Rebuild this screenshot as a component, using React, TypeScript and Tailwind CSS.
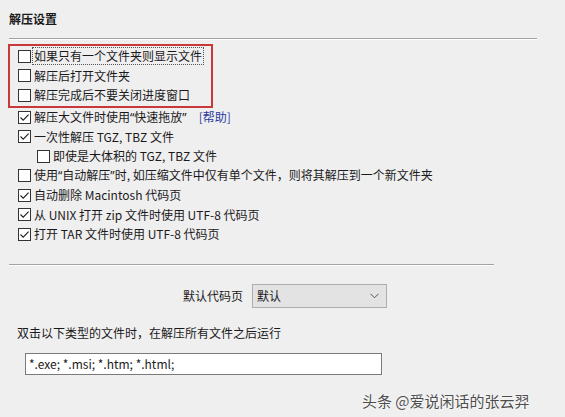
import React from "react";

const font = { fontFamily: '"Noto Sans CJK SC", "Noto Sans", sans-serif' };

// 引号用窄的西文字体
function Q({ children }: { children: React.ReactNode }) {
  return <span style={{ fontFamily: '"Noto Sans", sans-serif' }}>{children}</span>;
}

function Box({ checked }: { checked?: boolean }) {
  return (
    <span className="flex h-[13px] w-[13px] shrink-0 items-center justify-center border border-[#333] bg-white">
      {checked && (
        <svg width="11" height="11" viewBox="0 0 11 11">
          <path d="M1.5 5.5 L4.2 8.2 L9.6 2.6" fill="none" stroke="#1f1f1f" strokeWidth="1.1" />
        </svg>
      )}
    </span>
  );
}

function Row({
  checked,
  indent,
  focus,
  children,
}: {
  checked?: boolean;
  indent?: boolean;
  focus?: boolean;
  children: React.ReactNode;
}) {
  return (
    <div className={`flex h-[19.5px] items-center gap-[2px] ${indent ? "pl-[37px]" : "pl-[18px]"}`}>
      <Box checked={checked} />
      <span
        className={`whitespace-nowrap px-[1px] leading-[16px] ${
          focus ? "outline-1 outline-dotted outline-[#555]" : ""
        }`}
      >
        {children}
      </span>
    </div>
  );
}

export default function App() {
  return (
    <div className="relative h-[417px] w-[565px] overflow-hidden bg-[#f0eff0] text-[12px] text-[#1a1a1a]" style={font}>
      <div className="pl-[9px] pt-[11px] text-[12px] font-bold leading-[16px]">解压设置</div>

      <div className="ml-[9px] mt-[11px] w-[528px] border-b border-[#a3a3a3] shadow-[0_1px_0_#ffffff]" />

      {/* 框起来的三项 */}
      <div className="ml-[8px] mt-[5px] w-[205px] border-2 border-[#c8393c] py-[0.5px] [&>div]:pl-[8px]">
        <Row focus>如果只有一个文件夹则显示文件</Row>
        <Row>解压后打开文件夹</Row>
        <Row>解压完成后不要关闭进度窗口</Row>
      </div>

      <Row checked>
        解压大文件时使用<Q>“</Q>快速拖放<Q>”</Q>
        <span className="ml-[12px] text-[#2b3aa0]">[帮助]</span>
      </Row>
      <Row checked>一次性解压 TGZ, TBZ 文件</Row>
      <Row indent>即使是大体积的 TGZ, TBZ 文件</Row>
      <Row>
        使用<Q>“</Q>自动解压<Q>”</Q>时, 如压缩文件中仅有单个文件，则将其解压到一个新文件夹
      </Row>
      <Row checked>自动删除 Macintosh 代码页</Row>
      <Row checked>从 UNIX 打开 zip 文件时使用 UTF-8 代码页</Row>
      <Row checked>打开 TAR 文件时使用 UTF-8 代码页</Row>

      <div className="ml-[9px] mt-[20px] w-[485px] border-b border-[#a3a3a3] shadow-[0_1px_0_#ffffff]" />

      <div className="mt-[19px] flex items-center pl-[183px]">
        <span className="leading-[16px]">默认代码页</span>
        <div className="ml-[9px] flex h-[24px] w-[135px] items-center justify-between border border-[#adadad] bg-[#e3e3e4] pl-[4px] pr-[7px]">
          <span className="leading-[16px]">默认</span>
          <svg width="9" height="6" viewBox="0 0 9 6">
            <path d="M0.5 0.8 L4.5 4.8 L8.5 0.8" fill="none" stroke="#555" strokeWidth="1" />
          </svg>
        </div>
      </div>

      <div className="mt-[17px] pl-[17px] leading-[16px]">双击以下类型的文件时，在解压所有文件之后运行</div>

      <div className="ml-[25px] mt-[12px] flex h-[22px] w-[357px] items-center border border-[#7a7a7a] bg-white pl-[3px] leading-[16px]">
        *.exe; *.msi; *.htm; *.html;
      </div>

      <div
        className="absolute left-[362px] top-[391px] whitespace-nowrap text-[15px] leading-[20px] text-[#4d4d4d]"
        style={{ textShadow: "0 0 2px #fff, 0 0 1px #fff" }}
      >
        头条 @爱说闲话的张云羿
      </div>
    </div>
  );
}
